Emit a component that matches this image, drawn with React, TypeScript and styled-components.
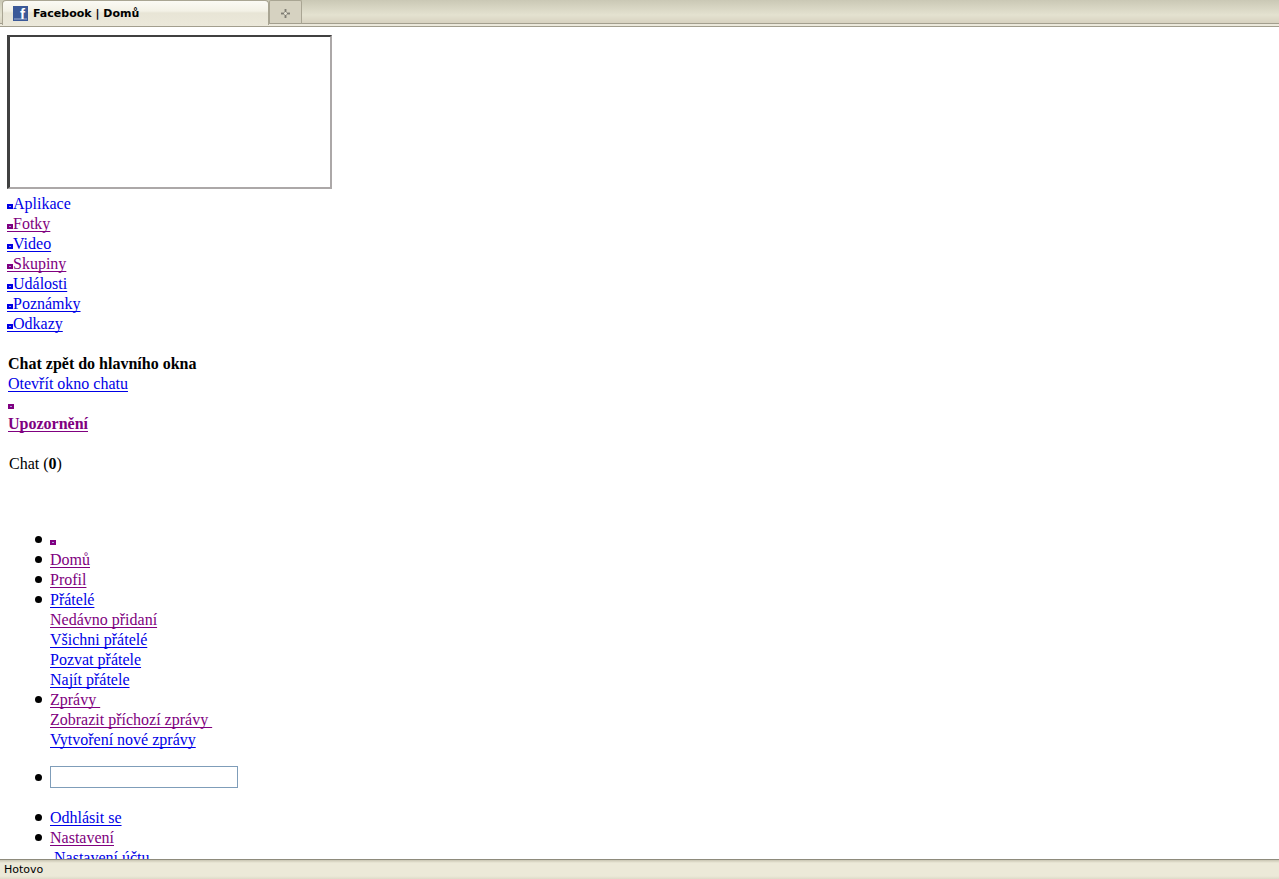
import React from "react";
import styled, { createGlobalStyle } from "styled-components";

const GlobalStyle = createGlobalStyle`
  * { box-sizing: border-box; }
  body {
    margin: 0;
    background: #fff;
    color: #000;
    font: 16px/20px "Liberation Serif", "Times New Roman", serif;
  }
`;

const Window = styled.div`
  display: flex;
  flex-direction: column;
  height: 100vh;
`;

const TabBar = styled.header`
  display: flex;
  flex: none;
  height: 27px;
  padding: 0 2px;
  background: linear-gradient(
    #cac8b5 0,
    #e4e2d0 15px,
    #d8d2c0 23px,
    #a29e8e 23px,
    #a29e8e 24px,
    #ece9dc 24px,
    #ece9dc 100%
  );
  border-bottom: 1px solid #a29e8e;
  font: 11px/14px "DejaVu Sans", Verdana, sans-serif;
`;

const Tab = styled.button<{ $active?: boolean }>`
  display: flex;
  align-items: center;
  justify-content: ${(p) => (p.$active ? "flex-start" : "center")};
  gap: 5px;
  width: ${(p) => (p.$active ? "267px" : "33px")};
  height: ${(p) => (p.$active ? "25px" : "24px")};
  padding: ${(p) => (p.$active ? "1px 10px 0" : "2px 0 0")};
  border: 1px solid #a9a593;
  border-bottom: ${(p) => (p.$active ? "0" : "1px solid #a29e8e")};
  border-radius: ${(p) => (p.$active ? "4px 4px 0 0" : "2px 2px 0 0")};
  background: ${(p) =>
    p.$active ? "linear-gradient(#fbfaf5 0, #f3f1e6 10px, #e8e5d6 12px, #ebe8da 100%)" : "#d6d2c1"};
  color: #000;
  font: inherit;
  font-weight: bold;
  white-space: nowrap;
`;

const Viewport = styled.main`
  flex: 1;
  min-height: 0;
  overflow: hidden;
  padding: 8px 7px 0;
`;

const Frame = styled.div`
  width: 325px;
  max-width: 100%;
  height: 154px;
  margin-bottom: 5px;
  border: 2px solid #aca8a8;
  border-width: 2px 2px 2px 3px;
  border-top-color: #404040;
  border-left-color: #404040;
`;

const Link = styled.a<{ $visited?: boolean; $plain?: boolean }>`
  color: ${(p) => (p.$visited ? "#800080" : "#0000e6")};
  text-decoration: ${(p) => (p.$plain ? "none" : "underline")};
  text-decoration-thickness: 1px;
  text-underline-offset: 2px;
  text-decoration-skip-ink: none;
  white-space: pre;
`;

const Row = styled.div`
  height: 20px;
`;

const Section = styled.section`
  margin: 20px 0 0 1px;
`;

const ChatCount = styled.p`
  margin: 20px 0 0 2px;
`;

const Menu = styled.ul`
  margin: 56px 0 0;
  padding: 0 0 0 28px;
  list-style: none;
`;

const Item = styled.li`
  display: flex;
  gap: 8px;

  &::before {
    content: "";
    flex: none;
    width: 7px;
    height: 7px;
    margin-top: 6px;
    border-radius: 50%;
    background: #000;
  }
`;

const SearchItem = styled(Item)`
  align-items: center;
  margin: 16px 0 20px;

  &::before {
    margin-top: 0;
  }
`;

const Search = styled.input`
  width: 188px;
  height: 22px;
  padding: 1px 3px;
  border: 1px solid #7f9db9;
  background: #fff;
  font: inherit;
`;

const StatusBar = styled.footer`
  flex: none;
  height: 20px;
  padding: 3px 4px 0;
  border-top: 1px solid #8e8b7c;
  background: linear-gradient(#c9c5b2 0, #ece9d8 3px, #ece9d8 16px, #dedac8 100%);
  font: 11px/14px "DejaVu Sans", Tahoma, sans-serif;
`;

const Pixel = styled.svg`
  width: 6px;
  height: 8px;
  vertical-align: -3px;
`;

const Missing = ({ underlined }: { underlined?: boolean }) => (
  <Pixel viewBox="0 0 6 8" shapeRendering="crispEdges" aria-hidden="true">
    <rect width="6" height="5" fill="currentColor" />
    <rect x="2" y="2" width="2" height="1" fill="#a8a0e0" />
    {underlined && <rect y="7" width="6" height="1" fill="currentColor" />}
  </Pixel>
);

const Logo = () => (
  <svg width="15" height="15" viewBox="0 0 15 15" overflow="visible" aria-hidden="true">
    <rect width="15" height="15" fill="#3b5998" />
    <rect x="1" y="12" width="13" height="2" fill="#6d84b4" />
    <text x="7" y="13" fill="#fff" fontFamily="Liberation Sans, sans-serif" fontWeight="bold" fontSize="15">
      f
    </text>
  </svg>
);

const Plus = () => (
  <svg width="9" height="9" viewBox="0 0 9 9" shapeRendering="crispEdges" aria-hidden="true">
    <path d="M3 0h3v3h3v3H6v3H3V6H0V3h3z" fill="#b0ad9f" />
    <path d="M4 0h1v3H4zM4 6h1v3H4zM0 4h3v1H0zM6 4h3v1H6z" fill="#7f7c74" />
    <path d="M4 3h1v1h1v1H5v1H4V5H3V4h1z" fill="#e4e1d3" />
  </svg>
);

type Entry = { label: string; visited?: boolean; plain?: boolean };

const apps: Entry[] = [
  { label: "Aplikace", plain: true },
  { label: "Fotky", visited: true },
  { label: "Video" },
  { label: "Skupiny", visited: true },
  { label: "Události" },
  { label: "Poznámky" },
  { label: "Odkazy" },
];

const menu: Entry[][] = [
  [{ label: "Domů", visited: true }],
  [{ label: "Profil", visited: true }],
  [
    { label: "Přátelé" },
    { label: "Nedávno přidaní", visited: true },
    { label: "Všichni přátelé" },
    { label: "Pozvat přátele" },
    { label: "Najít přátele" },
  ],
  [
    { label: "Zprávy ", visited: true },
    { label: "Zobrazit příchozí zprávy ", visited: true },
    { label: "Vytvoření nové zprávy" },
  ],
];

const account: Entry[][] = [
  [{ label: "Odhlásit se" }],
  [{ label: "Nastavení", visited: true }, { label: "\u00a0Nastavení účtu" }],
];

const MenuItem = ({ entries }: { entries: Entry[] }) => (
  <Item>
    <div>
      {entries.map((e) => (
        <Row key={e.label}>
          <Link href="#" $visited={e.visited}>{e.label}</Link>
        </Row>
      ))}
    </div>
  </Item>
);

export default function App() {
  return (
    <Window>
      <GlobalStyle />
      <TabBar>
        <Tab $active>
          <Logo />
          Facebook | Domů
        </Tab>
        <Tab aria-label="Nový panel">
          <Plus />
        </Tab>
      </TabBar>
      <Viewport>
        <Frame />
        <nav>
          {apps.map((e) => (
            <Row key={e.label}>
              <Link href="#" $visited={e.visited} $plain={e.plain}>
                <Missing underlined={!e.plain} />
                {e.label}
              </Link>
            </Row>
          ))}
        </nav>
        <Section>
          <Row>
            <b>Chat zpět do hlavního okna</b>
          </Row>
          <Row>
            <Link href="#">Otevřít okno chatu</Link>
          </Row>
          <Row>
            <Link href="#" $visited $plain aria-label="Upozornění">
              <Missing />
            </Link>
          </Row>
          <Row>
            <Link href="#" $visited>
              <b>Upozornění</b>
            </Link>
          </Row>
        </Section>
        <ChatCount>
          Chat (<b>0</b>)
        </ChatCount>
        <Menu>
          <Item>
            <Row>
              <Link href="#" $visited $plain aria-label="Facebook">
                <Missing />
              </Link>
            </Row>
          </Item>
          {menu.map((entries) => (
            <MenuItem key={entries[0].label} entries={entries} />
          ))}
          <SearchItem>
            <Search type="text" aria-label="Hledat" />
          </SearchItem>
          {account.map((entries) => (
            <MenuItem key={entries[0].label} entries={entries} />
          ))}
        </Menu>
      </Viewport>
      <StatusBar>Hotovo</StatusBar>
    </Window>
  );
}
